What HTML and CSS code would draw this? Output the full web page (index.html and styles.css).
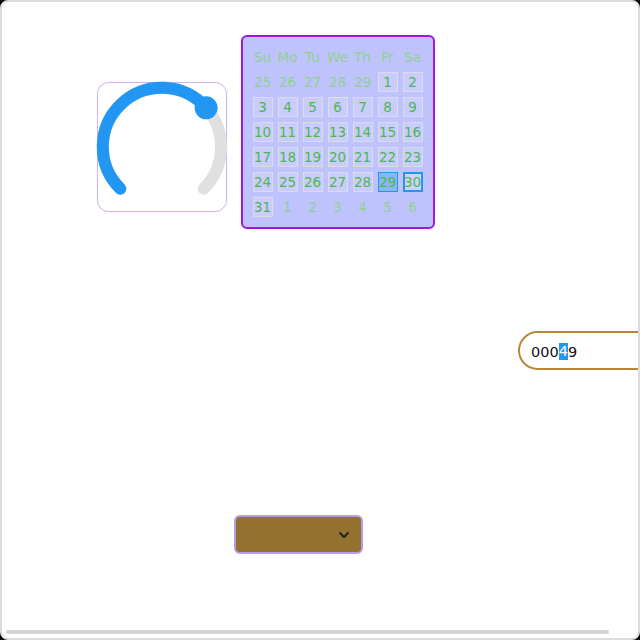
FILE: index.html
```html
<!DOCTYPE html>
<html lang="en">
<head>
<meta charset="utf-8">
<title>Widgets</title>
<link rel="stylesheet" href="styles.css">
</head>
<body>
<div class="frame">
  <div class="row-top">
    <div class="knob">
      <svg width="128" height="128" viewBox="0 0 128 128">
        <path d="M22.3 105.7 A59 59 0 1 1 105.7 105.7" fill="none" stroke="#e0e0e0" stroke-width="12" stroke-linecap="round"/>
        <path d="M22.3 105.7 A59 59 0 1 1 108.1 24.8" fill="none" stroke="#2196f3" stroke-width="12" stroke-linecap="round"/>
        <circle cx="108.1" cy="24.8" r="11.5" fill="#2196f3"/>
      </svg>
    </div>
    <div class="calendar">
      <span class="hd">Su</span><span class="hd">Mo</span><span class="hd">Tu</span><span class="hd">We</span><span class="hd">Th</span><span class="hd">Fr</span><span class="hd">Sa</span>
      <span class="out">25</span><span class="out">26</span><span class="out">27</span><span class="out">28</span><span class="out">29</span><span class="day">1</span><span class="day">2</span>
      <span class="day">3</span><span class="day">4</span><span class="day">5</span><span class="day">6</span><span class="day">7</span><span class="day">8</span><span class="day">9</span>
      <span class="day">10</span><span class="day">11</span><span class="day">12</span><span class="day">13</span><span class="day">14</span><span class="day">15</span><span class="day">16</span>
      <span class="day">17</span><span class="day">18</span><span class="day">19</span><span class="day">20</span><span class="day">21</span><span class="day">22</span><span class="day">23</span>
      <span class="day">24</span><span class="day">25</span><span class="day">26</span><span class="day">27</span><span class="day">28</span><span class="day selected">29</span><span class="day focused">30</span>
      <span class="day">31</span><span class="out">1</span><span class="out">2</span><span class="out">3</span><span class="out">4</span><span class="out">5</span><span class="out">6</span>
    </div>
  </div>
  <div class="row-mid">
    <div class="num-input">000<span class="sel">4</span>9</div>
  </div>
  <div class="row-bottom">
    <div class="select">
      <svg width="12" height="8" viewBox="0 0 12 8"><path d="M1.5 1.5 L6 6 L10.5 1.5" fill="none" stroke="#222" stroke-width="2"/></svg>
    </div>
  </div>
  <div class="scroll-thumb"></div>
</div>
</body>
</html>
```
FILE: styles.css
```css
html, body {
  margin: 0;
  padding: 0;
  background: #000;
}
.frame {
  position: relative;
  width: 640px;
  height: 640px;
  box-sizing: border-box;
  border: 2px solid #dcdcdc;
  border-radius: 8px;
  background: #fff;
  overflow: hidden;
  font-family: "DejaVu Sans", sans-serif;
}
.row-top {
  display: flex;
  align-items: flex-start;
  gap: 14px;
  padding: 33px 0 0 95px;
}
.knob {
  margin-top: 47px;
  width: 128px;
  height: 128px;
  border: 1px solid #d2b4f0;
  border-radius: 12px;
  box-shadow: 0 0 1px #e2ccf6;
  display: flex;
}
.knob svg {
  overflow: visible;
}
.calendar {
  width: 175px;
  padding: 7px 8px 8px 7px;
  border: 2px solid #a414dc;
  border-radius: 6px;
  background: #bfc3fd;
  display: grid;
  grid-template-columns: repeat(7, 25px);
  grid-auto-rows: 25px;
  font-size: 13.5px;
  color: #4cb84c;
}
.calendar span {
  display: flex;
  align-items: center;
  justify-content: center;
}
.hd {
  color: #8fd08f;
}
.out {
  color: #8fd08f;
}
.day {
  width: 20px;
  height: 20px;
  box-sizing: border-box;
  margin: 2.5px;
  border: 1px solid #dcdce6;
  background: #c9ccfc;
}
.day.selected {
  background: #89b6f6;
  border-color: #2196f3;
}
.day.focused {
  border: 2px solid #2196f3;
  background: #d0d3fc;
}
.row-mid {
  margin-top: 102px;
  padding-left: 516px;
  white-space: nowrap;
}
.num-input {
  display: inline-flex;
  align-items: center;
  width: 142px;
  height: 39px;
  box-sizing: border-box;
  border: 2px solid #b8883a;
  border-radius: 20px;
  padding-left: 11px;
  padding-top: 2px;
  font-size: 14.5px;
  color: #111;
}
.sel {
  background: #2196f3;
  color: #fff;
  line-height: 17px;
}
.row-bottom {
  margin-top: 145px;
  padding-left: 232px;
}
.select {
  width: 129px;
  height: 39px;
  box-sizing: border-box;
  border: 2px solid #b69be6;
  border-radius: 6px;
  background: #937230;
  display: flex;
  align-items: center;
  justify-content: flex-end;
  padding-right: 11px;
}
.scroll-thumb {
  position: absolute;
  left: 4px;
  bottom: 4px;
  width: 603px;
  height: 4px;
  border-radius: 2px;
  background: #d4d4d4;
}
```
